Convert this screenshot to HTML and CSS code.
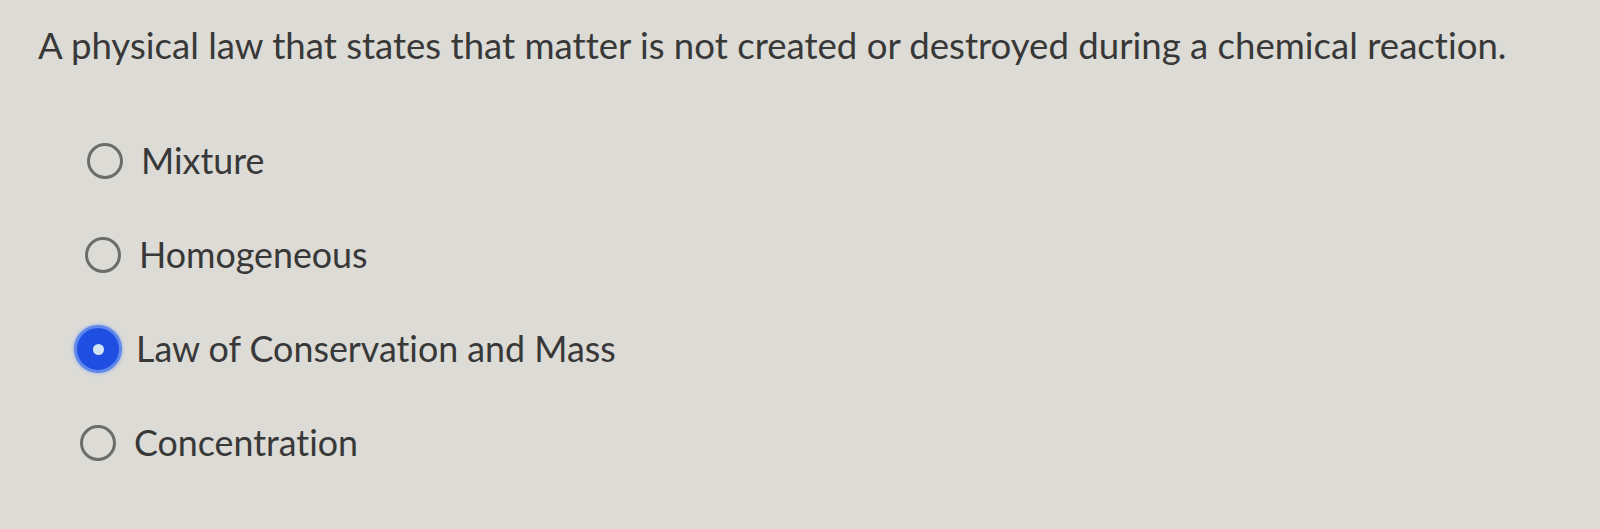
FILE: index.html
```html
<!DOCTYPE html>
<html>
<head>
<meta charset="utf-8">
<link rel="stylesheet" href="styles.css">
</head>
<body>
<div class="quiz">
  <p class="question">A physical law that states that matter is not created or destroyed during a chemical reaction.</p>
  <div class="options">
    <label class="option o1"><span class="radio"></span><span class="label">Mixture</span></label>
    <label class="option o2"><span class="radio"></span><span class="label">Homogeneous</span></label>
    <label class="option o3 selected"><span class="radio"><span class="dot"></span></span><span class="label">Law of Conservation and Mass</span></label>
    <label class="option o4"><span class="radio"></span><span class="label">Concentration</span></label>
  </div>
</div>
</body>
</html>
```
FILE: styles.css
```css
html, body {
  margin: 0;
  padding: 0;
  height: 100%;
}
body {
  background: #dcdbd6;
  font-family: Lato, "Open Sans", sans-serif;
  color: #383838;
  width: 1600px;
  height: 529px;
  overflow: hidden;
  font-variant-ligatures: none;
}
.quiz {
  padding: 21px 0 0 38px;
}
.question {
  margin: 0;
  font-size: 36.6px;
  line-height: 48px;
}
.options {
  display: flex;
  flex-direction: column;
  margin-top: 70px;
  gap: 50px;
}
.option {
  display: flex;
  align-items: center;
  gap: 18px;
  height: 44px;
  font-size: 35.8px;
  line-height: 44px;
}
.o1 { padding-left: 49px; }
.o2 { padding-left: 47px; }
.o3 { padding-left: 36px; gap: 14px; }
.o4 { padding-left: 42px; }
.radio {
  width: 36px;
  height: 36px;
  border: 3px solid #6c6c6a;
  border-radius: 50%;
  box-sizing: border-box;
  display: flex;
  align-items: center;
  justify-content: center;
  flex: none;
}
.selected .radio {
  width: 48px;
  height: 48px;
  border: 3px solid #5f88ea;
  background: #1e4fe2;
  box-shadow: 0 0 3px 1px rgba(140,170,235,0.7);
}
.selected .dot {
  width: 11px;
  height: 11px;
  border-radius: 50%;
  background: #d3e5f4;
}
```
